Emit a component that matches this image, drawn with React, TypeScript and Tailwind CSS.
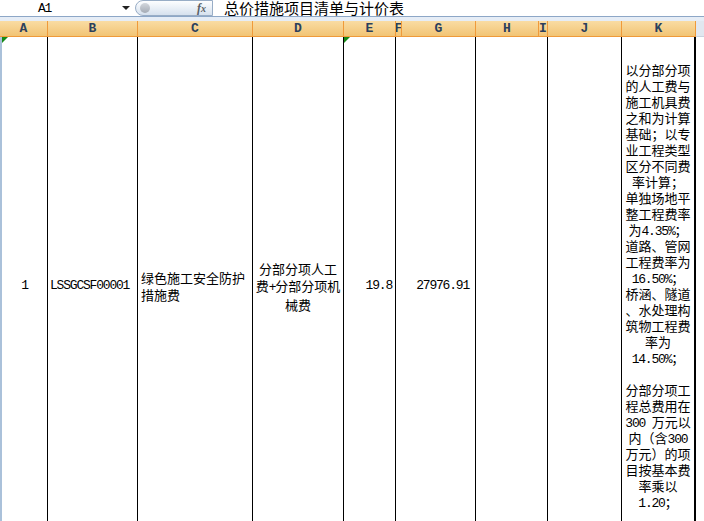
import React from "react";

const MONO = "font-['Liberation_Mono',monospace]";
const CJK = "font-['Noto_Sans_CJK_SC',sans-serif]";
const NUM = "font-['Liberation_Mono',monospace] text-[13px] tracking-[-1.2px]";

function R({ s }: { s: string }) {
  const parts = s.split(/([\x20-\x7e]+)/);
  return (
    <>
      {parts.map((p, i) =>
        i % 2 === 1 ? (
          <span key={i} className={`${NUM} whitespace-pre`}>
            {p}
          </span>
        ) : (
          <span key={i}>{p}</span>
        )
      )}
    </>
  );
}

const headers = [
  { l: "A", c: "w-[48px]" },
  { l: "B", c: "w-[90px]" },
  { l: "C", c: "w-[115px]" },
  { l: "D", c: "w-[91px]" },
  { l: "E", c: "w-[52px]" },
  { l: "F", c: "w-[6px]" },
  { l: "G", c: "w-[74px]" },
  { l: "H", c: "w-[63px]" },
  { l: "I", c: "w-[9px]" },
  { l: "J", c: "w-[74px]" },
  { l: "K", c: "w-[74px]" },
];

const kLines = [
  "以分部分项",
  "的人工费与",
  "施工机具费",
  "之和为计算",
  "基础；以专",
  "业工程类型",
  "区分不同费",
  "率计算；",
  "单独场地平",
  "整工程费率",
  "为4.35%；",
  "道路、管网",
  "工程费率为",
  "16.50%；",
  "桥涵、隧道",
  "、水处理构",
  "筑物工程费",
  "率为",
  "14.50%；",
  "",
  "分部分项工",
  "程总费用在",
  "300 万元以",
  "内（含300",
  "万元）的项",
  "目按基本费",
  "率乘以",
  "1.20；",
];

function Tri() {
  return (
    <div className="absolute top-0 left-0 w-0 h-0 border-t-[6px] border-r-[6px] border-t-[#168a16] border-r-transparent" />
  );
}

export default function App() {
  return (
    <div className={`w-[704px] h-[521px] overflow-hidden bg-white text-black ${CJK}`}>
      {/* formula bar */}
      <div className="h-[16px] flex items-stretch bg-white">
        <div className="w-[135px] relative flex items-center">
          <span className={`${NUM} ml-[38px] leading-none`}>A1</span>
          <div className="absolute left-[122px] top-[6px] w-0 h-0 border-l-[4px] border-r-[4px] border-t-[4px] border-l-transparent border-r-transparent border-t-[#222]" />
        </div>
        <div className="w-[78px] h-[16px] rounded-l-full border border-[#98adc6] bg-gradient-to-b from-[#fdfeff] to-[#d6e1ee] flex items-center justify-between pl-[4px] pr-[6px]">
          <div className="w-[10px] h-[10px] rounded-full bg-gradient-to-b from-[#d3d7dd] to-[#a4abb5]" />
          <span className="font-['Liberation_Serif',serif] italic font-bold text-[12px] text-[#5a5f66] leading-none">
            f<span className="text-[10px]">x</span>
          </span>
        </div>
        <div className="flex-1 flex items-center pl-[11px] overflow-hidden">
          <span className="text-[15px] leading-[16px] whitespace-nowrap">总价措施项目清单与计价表</span>
        </div>
      </div>
      <div className="h-[1px] bg-[#8da7c7]" />
      <div className="h-[4px] bg-[#e6edf6]" />
      {/* column header */}
      <div className="h-[16px] flex bg-[#e1e7ef]">
        {headers.map((h) => (
          <div
            key={h.l}
            className={`${h.c} shrink-0 h-full flex items-center justify-center overflow-hidden border-r border-b border-[#ef9a3a] bg-gradient-to-b from-[#f9dca3] to-[#f2c474] ${MONO} text-[13px] font-bold text-[#2b405c] leading-none`}
          >
            {h.l}
          </div>
        ))}
        <div className="flex-1 h-full border-b border-[#c9d3df]" />
      </div>
      {/* data row */}
      <div className="h-[498px] flex text-[13px]">
        <div className="w-[48px] shrink-0 relative border-l-2 border-l-[#aac1da] border-r border-black flex items-center justify-center">
          <Tri />
          <span className={NUM}>1</span>
        </div>
        <div className="w-[90px] shrink-0 border-r border-black flex items-center pl-[2px]">
          <span className={NUM}>LSSGCSF00001</span>
        </div>
        <div className="w-[115px] shrink-0 border-r border-black flex items-center pl-[3px]">
          <div className="leading-[17px]">
            <div>绿色施工安全防护</div>
            <div>措施费</div>
          </div>
        </div>
        <div className="w-[91px] shrink-0 border-r border-black flex items-center justify-center">
          <div className="leading-[17px] text-center">
            <div>分部分项人工</div>
            <div>
              费<R s="+" />分部分项机
            </div>
            <div>械费</div>
          </div>
        </div>
        <div className="w-[52px] shrink-0 relative border-r border-black flex items-center justify-end pr-[3px]">
          <Tri />
          <span className={NUM}>19.8</span>
        </div>
        <div className="w-[80px] shrink-0 border-r border-black flex items-center justify-end pr-[6px]">
          <span className={NUM}>27976.91</span>
        </div>
        <div className="w-[72px] shrink-0 border-r border-black" />
        <div className="w-[74px] shrink-0 border-r border-black" />
        <div className="w-[74px] shrink-0 border-r-2 border-black flex items-center justify-center">
          <div className="text-center leading-[16px]">
            {kLines.map((l, i) => (
              <div key={i} className="h-[16px] whitespace-nowrap">
                <R s={l} />
              </div>
            ))}
          </div>
        </div>
        <div className="flex-1" />
      </div>
    </div>
  );
}
